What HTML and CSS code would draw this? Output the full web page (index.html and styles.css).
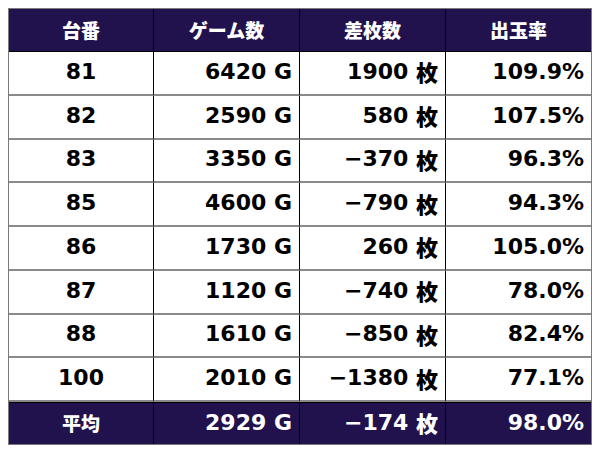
FILE: index.html
```html
<!DOCTYPE html>
<html lang="ja">
<head>
<meta charset="utf-8">
<link rel="stylesheet" href="styles.css">
</head>
<body>
<div class="sheet">
  <div class="cell head">台番</div>
  <div class="cell head">ゲーム数</div>
  <div class="cell head">差枚数</div>
  <div class="cell head last">出玉率</div>

  <div class="cell num">81</div><div class="cell val">6420 G</div><div class="cell val">1900 <span class="jp">枚</span></div><div class="cell val last">109.9%</div>
  <div class="cell num">82</div><div class="cell val">2590 G</div><div class="cell val">580 <span class="jp">枚</span></div><div class="cell val last">107.5%</div>
  <div class="cell num">83</div><div class="cell val">3350 G</div><div class="cell val">−370 <span class="jp">枚</span></div><div class="cell val last">96.3%</div>
  <div class="cell num">85</div><div class="cell val">4600 G</div><div class="cell val">−790 <span class="jp">枚</span></div><div class="cell val last">94.3%</div>
  <div class="cell num">86</div><div class="cell val">1730 G</div><div class="cell val">260 <span class="jp">枚</span></div><div class="cell val last">105.0%</div>
  <div class="cell num">87</div><div class="cell val">1120 G</div><div class="cell val">−740 <span class="jp">枚</span></div><div class="cell val last">78.0%</div>
  <div class="cell num">88</div><div class="cell val">1610 G</div><div class="cell val">−850 <span class="jp">枚</span></div><div class="cell val last">82.4%</div>
  <div class="cell num">100</div><div class="cell val">2010 G</div><div class="cell val">−1380 <span class="jp">枚</span></div><div class="cell val last">77.1%</div>

  <div class="cell foot label">平均</div><div class="cell foot val">2929 G</div><div class="cell foot val">−174 <span class="jp">枚</span></div><div class="cell foot val last">98.0%</div>
</div>
</body>
</html>
```
FILE: styles.css
```css
html, body {
  margin: 0;
  padding: 0;
  background: #ffffff;
}
body {
  padding: 8px;
}
.sheet {
  display: grid;
  grid-template-columns: 145px 146px 146px 145px;
  grid-template-rows: 43px repeat(8, 43.75px) 42px;
  width: 582px;
  border: 1px solid #7a7a7a;
  font-family: "DejaVu Sans", "Noto Sans CJK JP", sans-serif;
  font-weight: bold;
}
.cell {
  box-sizing: border-box;
  display: flex;
  align-items: center;
  border-right: 1px solid #000000;
  border-bottom: 2px solid #8a8a8a;
  color: #000000;
  font-size: 22px;
  padding-bottom: 3px;
  white-space: pre;
}
.cell.last {
  border-right: none;
}
.jp {
  font-family: "Noto Sans CJK JP", sans-serif;
  font-weight: 900;
  font-size: 22px;
}
.head {
  background: #21124d;
  color: #ffffff;
  justify-content: center;
  font-family: "Noto Sans CJK JP", sans-serif;
  font-weight: 900;
  font-size: 19px;
  border-bottom: 1px solid #000000;
  padding-bottom: 2px;
}
.num {
  justify-content: center;
}
.val {
  justify-content: flex-end;
  padding-right: 7px;
}
.foot {
  background: #21124d;
  color: #ffffff;
  border-bottom: none;
  border-top: 1px solid #000000;
}
.label {
  justify-content: center;
  font-family: "Noto Sans CJK JP", sans-serif;
  font-weight: 900;
  font-size: 19px;
}
```
